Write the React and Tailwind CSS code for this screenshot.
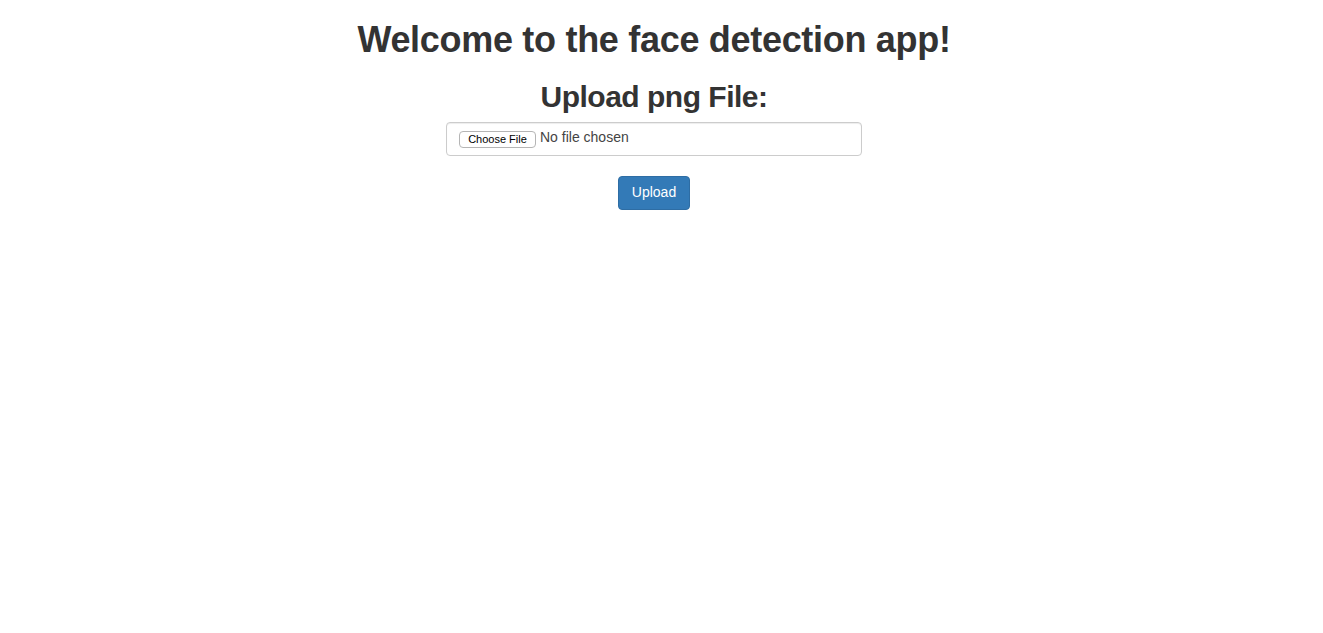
import React from 'react';

const App = () => {
  return (
    <div className="min-h-[633px] bg-white text-[#333] font-['Liberation_Sans',Arial,sans-serif] pr-[15px]">
      <div className="flex flex-col items-center">
        <h1 className="mt-5 mb-[10px] text-[36px] leading-[1.1] font-bold tracking-[-0.3px]">
          Welcome to the face detection app!
        </h1>
        <h2 className="mt-[10px] mb-[9px] text-[30px] leading-[1.1] font-bold tracking-[-0.5px]">
          Upload png File:
        </h2>
        <form className="flex flex-col items-center" onSubmit={(e) => e.preventDefault()}>
          {/* Fake file input so it looks like the mac chrome one */}
          <div className="w-[416px] h-[34px] border border-[#ccc] rounded px-3 pt-[6px] flex items-start gap-[4px] shadow-[inset_0_1px_1px_rgba(0,0,0,0.075)]">
            <button
              type="button"
              className="h-[17px] w-[77px] mt-[2px] border border-[#b5b5b5] rounded-[4px] bg-white text-[11px] leading-[15px] text-black text-center"
            >
              Choose File
            </button>
            <span className="text-[14px] leading-[17px] text-[#444]">No file chosen</span>
          </div>
          <button
            type="submit"
            className="mt-5 w-[72px] h-[34px] bg-[#337ab7] border border-[#2e6da4] rounded text-white text-[14px]"
          >
            Upload
          </button>
        </form>
      </div>
    </div>
  );
};

export default App;
